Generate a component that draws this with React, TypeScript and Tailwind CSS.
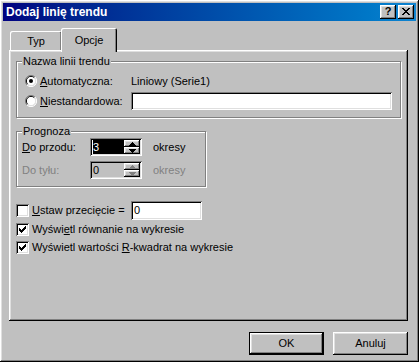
import React from 'react'

const raised =
  'shadow-[inset_-1px_-1px_#000,inset_1px_1px_#fff,inset_-2px_-2px_#808080,inset_2px_2px_#dfdfdf]'
const sunken =
  'shadow-[inset_1px_1px_#808080,inset_-1px_-1px_#fff,inset_2px_2px_#000,inset_-2px_-2px_#dfdfdf]'

function Radio({ checked }: { checked?: boolean }) {
  return (
    <svg width="12" height="12" viewBox="0 0 12 12" className="shrink-0">
      <path d="M10 2 A5.5 5.5 0 0 0 2 10" fill="none" stroke="#808080" strokeWidth="1" />
      <circle cx="6" cy="6" r="5" fill="#fff" />
      <path d="M9.3 2.7 A4.5 4.5 0 0 0 2.7 9.3" fill="none" stroke="#000" strokeWidth="1" />
      <path d="M2 10 A5.5 5.5 0 0 0 10 2" fill="none" stroke="#fff" strokeWidth="1" />
      <path d="M2.7 9.3 A4.5 4.5 0 0 0 9.3 2.7" fill="none" stroke="#dfdfdf" strokeWidth="1" />
      {checked && <circle cx="6" cy="6" r="2" fill="#000" />}
    </svg>
  )
}

function Check({ checked }: { checked?: boolean }) {
  return (
    <div className={`w-[13px] h-[13px] bg-white shrink-0 relative ${sunken}`}>
      {checked && (
        <svg width="13" height="13" viewBox="0 0 13 13" className="absolute left-0 top-0">
          <path d="M3 5v3h1v1h1v1h1V9h1V8h1V7h1V6h1V3H9v1H8v1H7v1H6v1H5V6H4V5z" fill="#000" />
        </svg>
      )}
    </div>
  )
}

function Spin({ value, active }: { value: string; active?: boolean }) {
  const arrowColor = active ? '#000' : '#808080'
  return (
    <div className={`w-[52px] h-[18px] flex items-stretch p-[2px] ${active ? 'bg-white' : 'bg-[#c0c0c0]'} ${sunken}`}>
      <div className="flex-1 flex items-center pl-[1px]">
        <span
          className={`leading-[14px] h-[14px] ${active ? 'bg-black text-white pr-[1px]' : 'text-[#000]'}`}
        >
          {value}
        </span>
        {active && <div className="flex-1 h-[14px] bg-black" />}
      </div>
      <div className="w-[16px] flex flex-col">
        {[0, 1].map((i) => (
          <div key={i} className={`flex-1 flex items-center justify-center bg-[#c0c0c0] ${raised}`}>
            <svg width="7" height="4" viewBox="0 0 7 4">
              {i === 0 ? (
                <path d="M3 0h1v1h1v1h1v1h1v1H0V3h1V2h1V1h1z" fill={arrowColor} />
              ) : (
                <path d="M0 0h7v1H6v1H5v1H4v1H3V3H2V2H1V1H0z" fill={arrowColor} />
              )}
            </svg>
          </div>
        ))}
      </div>
    </div>
  )
}

function Group({ title, className, children }: { title: string; className: string; children: React.ReactNode }) {
  return (
    <div className={`relative border border-[#808080] shadow-[1px_1px_#fff,inset_1px_1px_#fff] ${className}`}>
      <span className="absolute -top-[8px] left-[5px] bg-[#c0c0c0] px-[1px] leading-[14px]">{title}</span>
      {children}
    </div>
  )
}

export default function App() {
  return (
    <div
      className={`w-[419px] h-[362px] bg-[#c0c0c0] p-[3px] flex flex-col text-[11px] text-black ${raised}`}
      style={{ fontFamily: '"Liberation Sans", Arial, sans-serif' }}
    >
      {/* Title bar */}
      <div className="h-[18px] bg-gradient-to-r from-[#000080] to-[#1084d0] flex items-center pl-[3px] pr-[2px]">
        <span className="text-white font-bold text-[12px] flex-1">Dodaj linię trendu</span>
        <div className={`w-[16px] h-[14px] bg-[#c0c0c0] flex items-center justify-center mr-[2px] ${raised}`}>
          <span className="font-bold text-[11px] leading-none -mt-[1px]">?</span>
        </div>
        <div className={`w-[16px] h-[14px] bg-[#c0c0c0] flex items-center justify-center ${raised}`}>
          <svg width="8" height="7" viewBox="0 0 8 7" className="-mt-[1px]">
            <path d="M0 0h2v1h1v1h2V1h1V0h2v1H7v1H6v1H5v1h1v1h1v1h1v1H6V6H5V5H3v1H2v1H0V6h1V5h1V4h1V3H2V2H1V1H0z" fill="#000" />
          </svg>
        </div>
      </div>

      {/* Tabs */}
      <div className="pl-[6px] pr-[8px] mt-[7px] flex flex-col">
        <div className="flex items-end h-[22px] pl-[1px] relative z-10">
          <div className="w-[52px] h-[19px] flex items-center justify-center pt-[1px] bg-[#c0c0c0] rounded-tl-[2px] rounded-tr-[2px] shadow-[inset_1px_1px_#fff,inset_-1px_0_#000,inset_-2px_0_#808080]">
            Typ
          </div>
          <div className="w-[56px] h-[24px] -mb-[2px] -ml-[1px] flex items-start justify-center pt-[4px] bg-[#c0c0c0] rounded-tl-[2px] rounded-tr-[2px] shadow-[inset_1px_1px_#fff,inset_-1px_0_#000,inset_-2px_0_#808080]">
            Opcje
          </div>
        </div>

        {/* Panel */}
        <div className={`h-[271px] px-[7px] pt-[11px] flex flex-col ${raised}`}>
          <Group title="Nazwa linii trendu" className="h-[57px] flex flex-col pl-[8px] pr-[8px] pt-[12px]">
            <div className="flex items-center h-[14px]">
              <Radio checked />
              <span className="ml-[3px] w-[91px]">
                <u>A</u>utomatyczna:
              </span>
              <span>Liniowy (Serie1)</span>
            </div>
            <div className="flex items-center mt-[4px]">
              <Radio />
              <span className="ml-[3px] w-[91px]">
                <u>N</u>iestandardowa:
              </span>
              <div className={`flex-1 h-[18px] bg-white ${sunken}`} />
            </div>
          </Group>

          <Group title="Prognoza" className="mt-[13px] w-[190px] h-[56px] flex flex-col pl-[5px] pt-[6px]">
            <div className="flex items-center h-[18px]">
              <span className="w-[68px]">
                <u>D</u>o przodu:
              </span>
              <Spin value="3" active />
              <span className="ml-[11px]">okresy</span>
            </div>
            <div className="flex items-center h-[18px] mt-[5px] text-[#808080]">
              <span className="w-[68px]">Do tyłu:</span>
              <Spin value="0" />
              <span className="ml-[11px]">okresy</span>
            </div>
          </Group>

          <div className="mt-[14px] flex flex-col">
            <div className="flex items-center h-[19px]">
              <Check />
              <span className="ml-[3px] w-[99px]">
                <u>U</u>staw przecięcie =
              </span>
              <div className={`w-[71px] h-[19px] bg-white pl-[3px] flex items-center ${sunken}`}>0</div>
            </div>
            <div className="flex items-center h-[13px] mt-[3px]">
              <Check checked />
              <span className="ml-[3px]">
                Wyświ<u>e</u>tl równanie na wykresie
              </span>
            </div>
            <div className="flex items-center h-[13px] mt-[5px]">
              <Check checked />
              <span className="ml-[3px]">
                Wyświetl wartości <u>R</u>-kwadrat na wykresie
              </span>
            </div>
          </div>
        </div>
      </div>

      {/* Buttons */}
      <div className="flex justify-end gap-[9px] pr-[8px] mt-[11px]">
        <div className="w-[75px] h-[23px] border border-black">
          <div className={`w-full h-full flex items-center justify-center ${raised}`}>OK</div>
        </div>
        <div className={`w-[75px] h-[23px] flex items-center justify-center ${raised}`}>Anuluj</div>
      </div>
    </div>
  )
}
